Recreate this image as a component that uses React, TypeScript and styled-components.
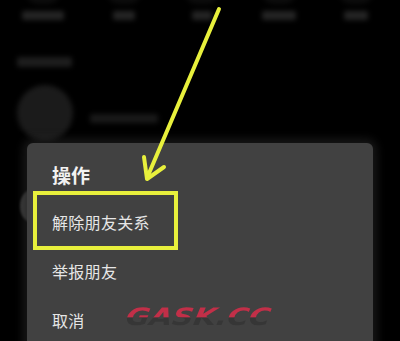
import React from "react";
import styled, { createGlobalStyle } from "styled-components";

const Global = createGlobalStyle`
  html, body { margin: 0; padding: 0; background: #000; }
  body { font-family: "Noto Sans CJK SC", "Noto Sans", sans-serif; }
`;

const Screen = styled.div`
  position: relative;
  width: 400px;
  height: 341px;
  overflow: hidden;
  background: #000;
`;

const Backdrop = styled.div`
  display: flex;
  flex-direction: column;
  filter: blur(2.5px);
  padding: 0 17px;
`;

const TabBar = styled.div`
  display: flex;
  justify-content: space-between;
  padding: 0 10px 0 5px;
  height: 30px;
`;

const Tab = styled.div`
  display: flex;
  flex-direction: column;
  align-items: center;
  gap: 7px;
`;

const TabIcon = styled.div`
  width: 34px;
  height: 12px;
  margin-top: -8px;
  border-radius: 0 0 17px 17px;
  background: #0c0c0c;
`;

const TabLabel = styled.div<{ $w: number }>`
  width: ${(p) => p.$w}px;
  height: 9px;
  background: #242424;
  border-radius: 2px;
`;

const SectionTitle = styled.div`
  width: 55px;
  height: 10px;
  margin-top: 27px;
  background: #1d1d1d;
  border-radius: 2px;
`;

const FriendRow = styled.div`
  display: flex;
  align-items: center;
  gap: 17px;
  margin-top: 18px;
`;

const Avatar = styled.div`
  width: 56px;
  height: 56px;
  border-radius: 50%;
  background: #1b1b1b;
`;

const FriendName = styled.div`
  width: 68px;
  height: 9px;
  margin-top: 10px;
  background: #191919;
  border-radius: 2px;
`;

const Knob = styled.div`
  position: absolute;
  left: 20px;
  top: 190px;
  width: 22px;
  height: 32px;
  border-radius: 50%;
  background: #3a3a3a;
  filter: blur(1px);
`;

const Dialog = styled.div`
  position: absolute;
  left: 27px;
  top: 143px;
  width: 346px;
  height: 220px;
  background: #414141;
  border-radius: 6px;
  box-shadow: 0 0 10px 4px rgba(40, 40, 40, 0.6);
  padding: 20px 0 0 25px;
  box-sizing: border-box;
  display: flex;
  flex-direction: column;
`;

const Title = styled.div`
  color: #f2f2f2;
  font-size: 19px;
  font-weight: 700;
  line-height: 24px;
  margin-bottom: 10px;
`;

const Item = styled.div`
  position: relative;
  height: 49px;
  display: flex;
  align-items: center;
  color: #e6e6e6;
  font-size: 16px;
  letter-spacing: 0.3px;
`;

const Highlight = styled.div`
  position: absolute;
  left: -19px;
  top: -6px;
  width: 145px;
  height: 59px;
  box-sizing: border-box;
  border: 4px solid #e8f03c;
`;

const Watermark = styled.div`
  position: absolute;
  left: 126px;
  top: 304px;
  font-family: "DejaVu Sans", sans-serif;
  font-size: 24px;
  font-weight: 900;
  font-style: italic;
  letter-spacing: 0px;
  transform: scaleX(1.22) skewX(-8deg);
  transform-origin: left center;
  background: linear-gradient(180deg, #c22f48 0%, #c22f48 50%, #363636 53%, #363636 100%);
  -webkit-background-clip: text;
  background-clip: text;
  color: transparent;
  line-height: 26px;
`;

const ArrowLayer = styled.svg`
  position: absolute;
  left: 0;
  top: 0;
  pointer-events: none;
`;

const tabs = [42, 22, 20, 34, 24];

export default function App() {
  return (
    <Screen>
      <Global />
      <Backdrop>
        <TabBar>
          {tabs.map((w, i) => (
            <Tab key={i}>
              <TabIcon />
              <TabLabel $w={w} />
            </Tab>
          ))}
        </TabBar>
        <SectionTitle />
        <FriendRow>
          <Avatar />
          <FriendName />
        </FriendRow>
      </Backdrop>
      <Knob />
      <Dialog>
        <Title>操作</Title>
        <Item>
          解除朋友关系
          <Highlight />
        </Item>
        <Item>举报朋友</Item>
        <Item>取消</Item>
      </Dialog>
      <Watermark>GASK.CC</Watermark>
      <ArrowLayer width="400" height="341" viewBox="0 0 400 341">
        <g stroke="#e8f03c" strokeWidth="4" strokeLinecap="round" strokeLinejoin="round" fill="none">
          <line x1="219" y1="9" x2="147" y2="178" />
          <polyline points="144,157 147,179 164,167" />
        </g>
      </ArrowLayer>
    </Screen>
  );
}
